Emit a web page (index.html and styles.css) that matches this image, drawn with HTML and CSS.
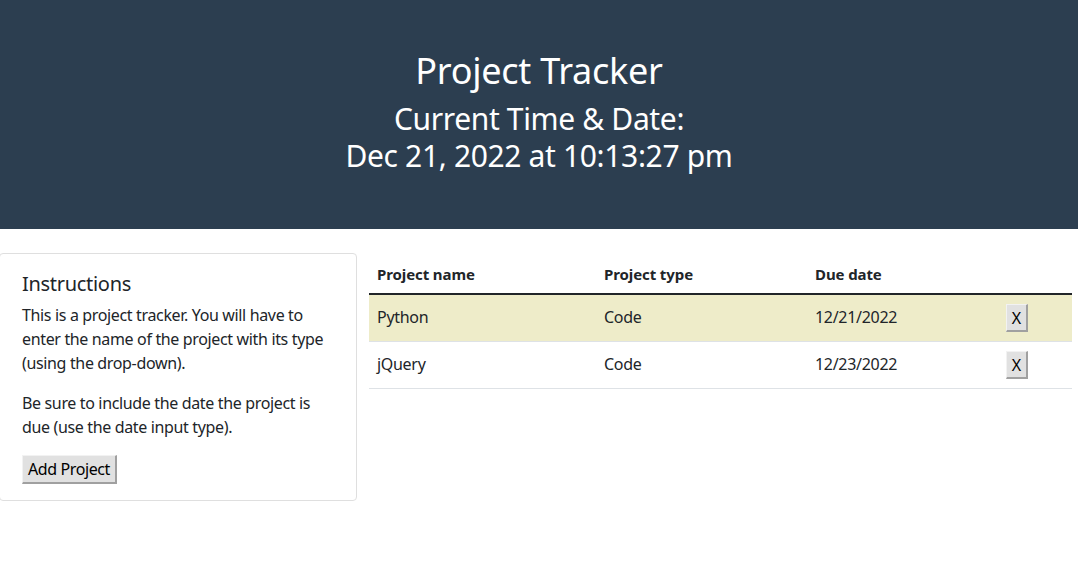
FILE: index.html
```html
<!DOCTYPE html>
<html lang="en">
<head>
<meta charset="utf-8">
<title>Project Tracker</title>
<link rel="stylesheet" href="styles.css">
</head>
<body>
<header class="hero">
  <h1 class="hero-title">Project Tracker</h1>
  <h2 class="hero-time">Current Time &amp; Date:<br>Dec 21, 2022 at 10:13:27 pm</h2>
</header>
<main class="main">
  <section class="card">
    <h5 class="card-title">Instructions</h5>
    <p class="card-text">This is a project tracker. You will have to enter the name of the project with its type (using the drop-down).</p>
    <p class="card-text">Be sure to include the date the project is due (use the date input type).</p>
    <button class="btn btn-add" type="button">Add Project</button>
  </section>
  <table class="table">
    <thead>
      <tr>
        <th class="col-name">Project name</th>
        <th class="col-type">Project type</th>
        <th class="col-date">Due date</th>
        <th class="col-act"></th>
      </tr>
    </thead>
    <tbody>
      <tr class="row-today">
        <td>Python</td>
        <td>Code</td>
        <td>12/21/2022</td>
        <td><button class="btn btn-x" type="button">X</button></td>
      </tr>
      <tr>
        <td>jQuery</td>
        <td>Code</td>
        <td>12/23/2022</td>
        <td><button class="btn btn-x" type="button">X</button></td>
      </tr>
    </tbody>
  </table>
</main>
</body>
</html>
```
FILE: styles.css
```css
* { box-sizing: border-box; }
html, body { margin: 0; padding: 0; }
body {
  font-family: "Noto Sans", "Open Sans", sans-serif;
  font-size: 16px;
  line-height: 24px;
  color: #212529;
  background: #fff;
  overflow: hidden;
}
.hero {
  background: #2c3e50;
  color: #fff;
  text-align: center;
  height: 229px;
  padding-top: 49px;
}
.hero-title {
  margin: 0 0 8px;
  font-size: 36px;
  line-height: 43px;
  font-weight: 400;
  letter-spacing: -0.25px;
}
.hero-time {
  margin: 0;
  font-size: 30px;
  line-height: 37px;
  font-weight: 400;
  letter-spacing: -0.35px;
}
.main {
  display: flex;
  align-items: flex-start;
  gap: 12px;
  padding-top: 24px;
}
.card {
  margin-left: -1px;
  width: 358px;
  flex: none;
  border: 1px solid #dfdfdf;
  border-radius: 4px;
  padding: 18px 20px 16px 22px;
}
.card-title {
  margin: 0 0 7px;
  font-size: 20px;
  line-height: 24px;
  font-weight: 400;
  letter-spacing: -0.3px;
}
.card-text {
  margin: 0 0 16px;
  letter-spacing: -0.35px;
}
.btn {
  font-family: inherit;
  color: #000;
  background: #e1e1e1;
  border-style: solid;
  border-width: 1px 2px 2px 1px;
  border-color: #f2f2f2 #a0a0a0 #a0a0a0 #f2f2f2;
  border-radius: 0;
  padding: 0;
  margin: 0;
  display: block;
}
.btn-add {
  width: 95px;
  height: 29px;
  font-size: 16px;
  line-height: 24px;
  letter-spacing: -0.4px;
}
.btn-x {
  width: 22px;
  height: 28px;
  font-size: 16px;
  line-height: 24px;
  margin-top: 1px;
}
.table {
  width: 703px;
  flex: none;
  border-collapse: collapse;
  table-layout: fixed;
}
.col-name { width: 227px; }
.col-type { width: 211px; }
.col-date { width: 191px; }
.col-act { width: 74px; }
.table th {
  text-align: left;
  font-weight: 700;
  font-size: 15px;
  letter-spacing: -0.1px;
  padding: 9px 8px 7px;
  line-height: 24px;
  border-bottom: 2px solid #212529;
}
.table td {
  padding: 7px 8px 9px;
  height: 47px;
  vertical-align: middle;
  border-bottom: 1px solid #dee2e6;
  letter-spacing: -0.3px;
}
.table td:last-child { padding-top: 8px; padding-bottom: 8px; }
.row-today td { background: #eeecc9; }
```
